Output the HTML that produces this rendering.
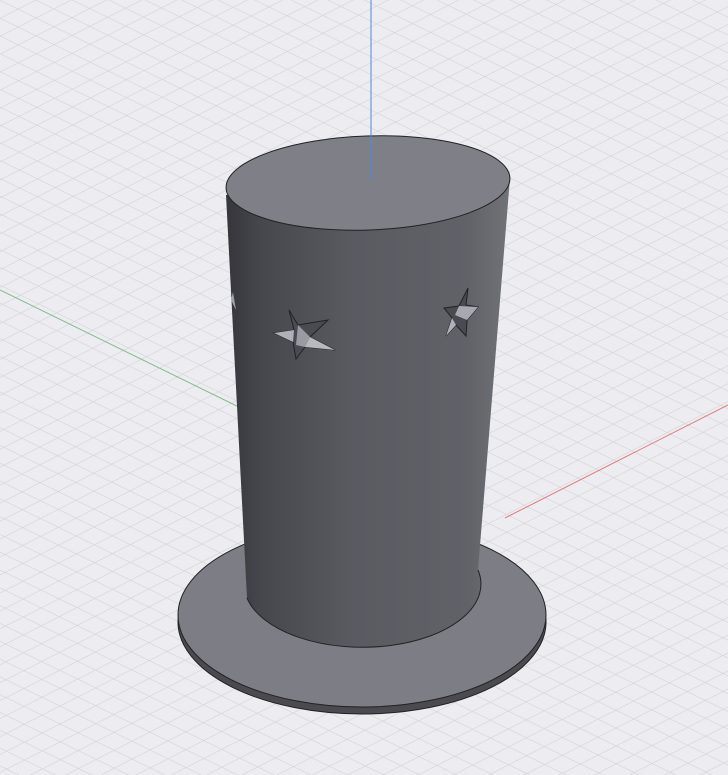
<!DOCTYPE html>
<html><head><style>html,body{margin:0;padding:0;background:#ececf1;width:728px;height:775px;overflow:hidden}</style></head>
<body>
<svg width="728" height="775" viewBox="0 0 728 775" xmlns="http://www.w3.org/2000/svg">
<defs>
<pattern id="pa" width="16" height="16" patternUnits="userSpaceOnUse" patternTransform="rotate(26)">
<line x1="0" y1="0" x2="16" y2="0" stroke="#d2d2d8" stroke-width="1.2"/></pattern>
<pattern id="pb" width="16" height="16" patternUnits="userSpaceOnUse" patternTransform="rotate(-27)">
<line x1="0" y1="0" x2="16" y2="0" stroke="#d2d2d8" stroke-width="1.2"/></pattern>
<linearGradient id="body" x1="226" y1="0" x2="510" y2="0" gradientUnits="userSpaceOnUse">
<stop offset="0" stop-color="#35353b"/><stop offset="0.12" stop-color="#46464d"/><stop offset="0.45" stop-color="#5a5a61"/><stop offset="0.85" stop-color="#616168"/><stop offset="1" stop-color="#727279"/></linearGradient>
</defs>
<rect width="728" height="775" fill="#ececf1"/>
<rect width="728" height="775" fill="url(#pa)"/>
<rect width="728" height="775" fill="url(#pb)"/>
<line x1="0" y1="290" x2="245" y2="410" stroke="#7fbf8a" stroke-width="1"/>
<line x1="728" y1="405" x2="505" y2="518" stroke="#e07a78" stroke-width="1"/>
<ellipse cx="362" cy="622" rx="184" ry="92" fill="#4a4a50" stroke="#222" stroke-width="1"/>
<ellipse cx="362" cy="615" rx="184" ry="92" fill="#7d7d85" stroke="#222" stroke-width="1"/>
<path d="M226,195 L247,598 A116,62 0 0 0 478,570 L510,178 Z" fill="url(#body)"/>
<path d="M247,598 A116,62 0 0 0 478,570" fill="none" stroke="#222" stroke-width="1"/>
<ellipse cx="368" cy="183" rx="142" ry="47" transform="rotate(-2 368 183)" fill="#7f7f88" stroke="#222" stroke-width="1"/>
<line x1="371" y1="0" x2="371" y2="180" stroke="#4a8de0" stroke-width="1"/>
<path d="M289,310 L298,325 L328,320 L310,337 L335,350 L305,347 L296,359 L293,342 L274,333 L294,330 Z" fill="#4a4a52" stroke="#222" stroke-width="1"/>
<path d="M298,325 L310,337 L305,347 L296,345 Z" fill="#9a9aa2"/>
<path d="M274,333 L294,330 L293,342 Z" fill="#b0b0b8"/>
<path d="M310,337 L335,350 L305,347 Z" fill="#b8b8c0"/>
<path d="M468,288 L466,305 L478,307 L467,320 L466,336 L456,325 L446,336 L452,318 L444,308 L459,306 Z" fill="#4a4a52" stroke="#222" stroke-width="1"/>
<path d="M459,306 L478,307 L467,320 L455,315 Z" fill="#a8a8b0"/>
<path d="M456,325 L446,336 L452,318 Z" fill="#b0b0b8"/>
<path d="M233,292 L236,310 L231,300 Z" fill="#a0a0a8"/>
</svg>
</body></html>
